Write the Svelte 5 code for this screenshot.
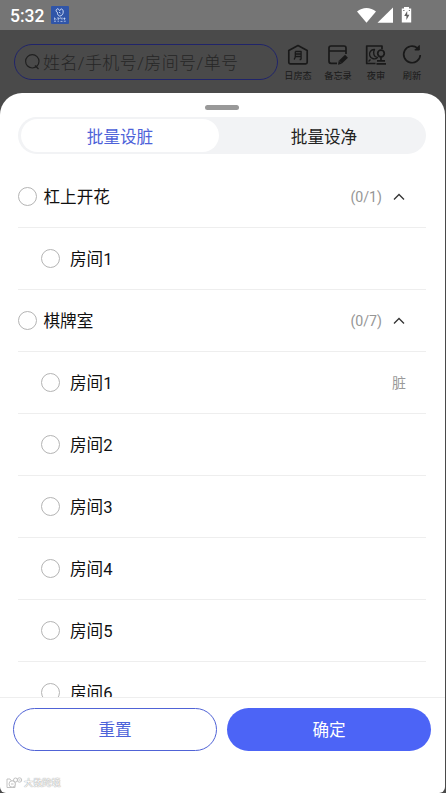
<script lang="ts">
  type Room = { name: string; tag?: string };
  type Group = { name: string; rooms: Room[]; total: number };

  const tabs = ['批量设脏', '批量设净'];
  let activeTab = $state(0);

  const groups: Group[] = [
    { name: '杠上开花', total: 1, rooms: [{ name: '房间1' }] },
    {
      name: '棋牌室',
      total: 7,
      rooms: [
        { name: '房间1', tag: '脏' },
        { name: '房间2' },
        { name: '房间3' },
        { name: '房间4' },
        { name: '房间5' },
        { name: '房间6' },
      ],
    },
  ];
</script>

<div class="screen">
  <div class="status">
    <span class="time">5:32</span>
    <svg class="app" viewBox="0 0 18 18">
      <rect width="18" height="18" rx="1" fill="#3055a8" />
      <g fill="none" stroke="#dce6fa" stroke-width="0.9">
        <path d="M6.2 2.8c-1.6 1-1.4 3 .2 3.5 0 2 .8 3.5 2.3 3.8 2-.2 3.4-1.8 3.5-3.9.2-2-.7-3.2-2-3.3-1 0-.8 1.5-1.5 1.8C8 4.2 7.6 2.4 6.2 2.8zM8 6.2l1.5 1" />
        <path d="M3.5 11.5v2l1-.8.8 1M6 12h2l-1 2M8.5 12.5l1-.8.8 1.3M11 11.5v2.2M12.4 12.5h2M13.4 11.5v2.5M3 15.2h2M6.5 15.2h1.5M9.5 15.4h2M12.8 15.2h2" stroke-width="0.7" />
      </g>
    </svg>
    <svg class="signals" viewBox="0 0 56 20">
      <path d="M0 5.5C5.5.8 13.5.8 19 5.5L9.5 16.8z" fill="#fff" />
      <path d="M36 1.5v15.3H20.5z" fill="#fff" />
      <path d="M47 1h5v1.5h2.200V16.5h-9.400V2.5H47z" fill="#fff" />
      <path d="M50.200 5l-3 5h2.200v4l3-5.200h-2.200z" fill="#606060" />
      <path d="M46.200 4.500h1.300M51.800 4.500h1.200" stroke="#777" />
    </svg>
  </div>

  <header class="header">
    <div class="search">
      <svg viewBox="0 0 18 18" fill="none" stroke="#202020" stroke-width="1.2">
        <circle cx="8.3" cy="8.3" r="6.7" />
        <path d="M11 12.5l3.500 3.500" />
      </svg>
      <span>姓名/手机号/房间号/单号</span>
    </div>
    <nav class="tools">
      <div class="tool">
        <svg viewBox="0 0 22 22">
          <path d="M1.800 6.500L11 1.500l9.200 5v11.800a1.500 1.500 0 0 1-1.500 1.500H3.300a1.500 1.500 0 0 1-1.500-1.500z" />
          <path d="M8.300 7.500h5.800v8M8.300 7.500v4.500q0 2.500-1.300 3.500M8.300 10h5.500M8.300 12.500h5.500M14.100 15.500h-1.500" stroke-width="1.3" />
        </svg>
        <span>日房态</span>
      </div>
      <div class="tool">
        <svg viewBox="0 0 22 22">
          <path d="M10 19.300H4a2 2 0 0 1-2-2V4a2 2 0 0 1 2-2h13a2 2 0 0 1 2 2v6M2 7h17" />
          <path d="M13.500 18l6-5.700" stroke-width="4.2" />
          <path d="M11 20.800l.8-4.200 3 3.200z" fill="#191919" stroke="none" />
        </svg>
        <span>备忘录</span>
      </div>
      <div class="tool">
        <svg viewBox="0 0 22 22">
          <path d="M10.500 19.500H1.700V2H17v3" />
          <path d="M9.500 5.500a4.700 4.700 0 1 0 3 8C9 13.200 7.500 9 9.500 5.500zM3.500 17.500l2-2" stroke-width="1.4" />
          <circle cx="16" cy="9.500" r="3.300" />
          <path d="M16 12.800v3.500M12 16.800h8M11.500 19.800h9.500" />
        </svg>
        <span>夜审</span>
      </div>
      <div class="tool">
        <svg viewBox="0 0 22 22">
          <path d="M16.500 4.200A8.300 8.300 0 1 0 19.300 11" />
          <path d="M18.300 1.500v4.500h-4.500z" fill="#191919" stroke-width="1" />
        </svg>
        <span>刷新</span>
      </div>
    </nav>
  </header>

  <section class="sheet">
    <div class="handle"></div>
    <div class="tabs">
      {#each tabs as tab, i}
        <button class="tab" class:active={activeTab === i} onclick={() => (activeTab = i)}>{tab}</button>
      {/each}
    </div>

    <div class="list">
      {#each groups as group}
        <div class="row">
          <span class="radio"></span>
          <span class="name">{group.name}</span>
          <span class="count">(0/{group.total})</span>
          <svg class="arrow" viewBox="0 0 12 8"><path d="M1 6.500L6 1.500l5 5" /></svg>
        </div>
        {#each group.rooms as room}
          <div class="row room">
            <span class="radio"></span>
            <span class="name">{room.name}</span>
            {#if room.tag}<span class="tag">{room.tag}</span>{/if}
          </div>
        {/each}
      {/each}
    </div>

    <footer class="footer">
      <div class="actions">
        <button class="btn">重置</button>
        <button class="btn primary">确定</button>
      </div>
      <div class="mark">
        <svg viewBox="0 0 17 12" fill="#fff" stroke="#bcbcbc" stroke-width="0.9">
          <path d="M1 2h3l1.500 2H9v6.500H1z" />
          <circle cx="6.2" cy="7" r="3.2" />
          <circle cx="9.5" cy="3" r="2" />
          <circle cx="13.5" cy="3" r="2.2" />
          <path d="M5 7h2.500M12.500 3h2" />
        </svg>
        <span>大数跨境</span>
      </div>
    </footer>
  </section>
</div>

<style>
  :global(body) {
    background: #444;
  }
  .screen {
    width: 446px;
    height: 793px;
    display: flex;
    flex-direction: column;
    overflow: hidden;
    background: #4a4a4a;
    font-family: Roboto, 'Noto Sans CJK SC', sans-serif;
    color: #111;
  }
  svg {
    display: block;
    flex: none;
  }
  button {
    font: inherit;
    border: 0;
    padding: 0;
    background: none;
  }
  .status {
    height: 30px;
    flex: none;
    box-sizing: border-box;
    display: flex;
    align-items: center;
    padding: 0 33px 0 10px;
    background: #757575;
  }
  .time {
    width: 41px;
    font-size: 17.5px;
    font-weight: 500;
    line-height: 30px;
    padding-top: 2px;
    color: #fff;
  }
  .app {
    width: 18px;
    height: 18px;
  }
  .signals {
    width: 56px;
    height: 20px;
    margin-left: auto;
    margin-top: 1px;
  }
  .header {
    height: 63px;
    flex: none;
    box-sizing: border-box;
    display: flex;
    align-items: flex-start;
    padding: 14px 0 0 14px;
    background: #4a4a4a;
  }
  .search {
    width: 264px;
    height: 36px;
    box-sizing: border-box;
    flex: none;
    display: flex;
    align-items: center;
    padding: 0 0 2px 9px;
    border: 1.5px solid #20246a;
    border-radius: 18px;
    font-size: 17px;
    font-weight: 300;
    letter-spacing: 0.4px;
    color: #262626;
    white-space: nowrap;
  }
  .search svg {
    width: 18px;
    height: 18px;
    margin: 2px 1px 0 0;
  }
  .tools {
    display: flex;
  }
  .tool {
    width: 40px;
    display: flex;
    flex-direction: column;
    align-items: center;
    font-size: 9.2px;
    line-height: 12px;
    color: #191919;
  }
  .tool:nth-child(n + 3) {
    width: 36px;
  }
  .tool svg {
    width: 22px;
    height: 22px;
    margin-bottom: 4px;
    fill: none;
    stroke: #191919;
    stroke-width: 1.7;
    stroke-linejoin: round;
  }
  .sheet {
    width: 445px;
    height: 700px;
    flex: none;
    display: flex;
    flex-direction: column;
    overflow: hidden;
    border-radius: 22px 22px 6px 6px;
    background: #fff;
  }
  .handle {
    width: 34px;
    height: 5px;
    flex: none;
    margin: 12px 0 0 205px;
    border-radius: 3px;
    background: #999;
  }
  .tabs {
    width: 408px;
    height: 37px;
    flex: none;
    box-sizing: border-box;
    display: flex;
    margin: 7px 0 0 18px;
    padding: 2px 3px;
    border-radius: 19px;
    background: #f2f3f5;
  }
  .tab {
    width: 198px;
    padding-top: 4px;
    border-radius: 17px;
    font-size: 16.6px;
    line-height: 29px;
    color: #222;
  }
  .tab:last-child {
    margin-left: 6px;
  }
  .tab.active {
    background: #fff;
    color: #4d62d9;
  }
  .list {
    flex: 1;
    min-height: 0;
    overflow: hidden;
    padding: 12px 19px 0 18px;
  }
  .row {
    height: 62px;
    box-sizing: border-box;
    display: flex;
    align-items: center;
    border-bottom: 1px solid #eee;
  }
  .room {
    padding-left: 23px;
  }
  .radio {
    width: 19px;
    height: 19px;
    box-sizing: border-box;
    flex: none;
    border: 1px solid #b4b4b4;
    border-radius: 50%;
  }
  .name {
    margin-left: 6.5px;
    padding-bottom: 1px;
    font-size: 16.6px;
  }
  .room .name {
    margin-left: 10px;
  }
  .count {
    margin-left: auto;
    font-size: 14.2px;
    color: #969696;
  }
  .arrow {
    width: 12px;
    height: 8px;
    margin: 1px 21px 0 11px;
    fill: none;
    stroke: #333;
    stroke-width: 1.3;
  }
  .tag {
    margin: 0 20px 1px auto;
    font-size: 14px;
    color: #999;
  }
  .footer {
    height: 96px;
    flex: none;
    box-sizing: border-box;
    padding: 10px 13px 0;
    border-top: 1px solid #eee;
  }
  .actions {
    display: flex;
    gap: 10px;
  }
  .btn {
    width: 204px;
    height: 43px;
    box-sizing: border-box;
    flex: none;
    padding-bottom: 1px;
    border: 1.5px solid #5063d6;
    border-radius: 22px;
    font-size: 16.6px;
    color: #4d62d9;
  }
  .btn.primary {
    border: 0;
    background: #4c64f6;
    color: #fff;
  }
  .mark {
    display: flex;
    align-items: center;
    margin: 25px 0 0 -7px;
    font-size: 9.2px;
    line-height: 13px;
    color: #fff;
    text-shadow: 0 0 1px #999, 0 0 1px #999;
  }
  .mark svg {
    width: 17px;
    height: 12px;
    margin-right: 1px;
  }
</style>
